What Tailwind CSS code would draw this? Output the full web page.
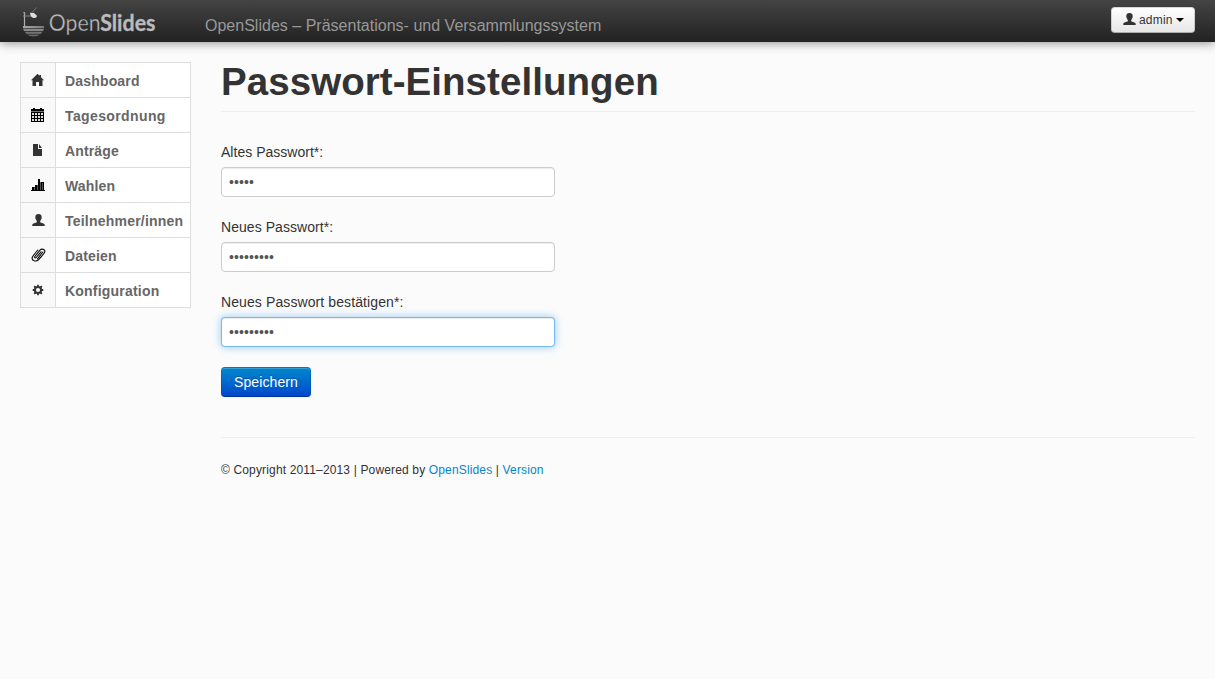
<!DOCTYPE html>
<html lang="de">
<head>
<meta charset="utf-8">
<title>OpenSlides – Passwort-Einstellungen</title>
<script src="https://cdn.jsdelivr.net/npm/@tailwindcss/browser@4"></script>
</head>
<body class="min-h-screen bg-[#fbfbfb] font-['Liberation_Sans',Arial,sans-serif] text-[14px] leading-5 text-[#333]">
<header class="flex h-[42px] items-start bg-linear-to-b from-[#444] to-[#222] pl-5 pr-5 shadow-[0_1px_10px_rgba(0,0,0,0.45)]">
  <a class="block h-[42px] w-[185px]" aria-label="OpenSlides">
    <svg width="145" height="42" viewBox="20 0 145 42">
      <defs>
        <linearGradient id="bowl" x1="0" x2="1" y1="0" y2="0"><stop offset="0" stop-color="#aaa"/><stop offset="1" stop-color="#777"/></linearGradient>
      </defs>
      <path d="M24.500 12v14" stroke="#b0b0b0" stroke-width="1.200"/>
      <path d="M23 16h8M23 12.500l2.500 1" stroke="#8a8a8a" stroke-width="1" fill="none"/>
      <path d="M32 12.500L36.500 7.500" stroke="#777" stroke-width="1"/>
      <path d="M30 12.800l4 .3 3 2.700c-.2 1.700-1.800 2.500-3.200 2.200-2.300-.3-3.600-2-3.800-5.200z" fill="#dedede"/>
      <path d="M23 26h21v2.300H23z" fill="url(#bowl)"/>
      <path d="M23.200 29h20.600l-.7 2H24z" fill="#888"/>
      <path d="M24.500 31.800h18l-1.500 1.900H26.500z" fill="#747474"/>
      <path d="M27 34.500h13c-3 2.600-10 2.600-13 0z" fill="#666"/>
      <text x="48.800" y="30.800" font-family="Lato, sans-serif" font-size="22.500" font-weight="400" fill="#bbb" stroke="#303030" stroke-width=".35" textLength="51.800" lengthAdjust="spacingAndGlyphs">Open</text>
      <text x="100.200" y="30.800" font-family="Lato, sans-serif" font-size="22.500" font-weight="700" fill="#bbb" stroke="#bbb" stroke-width=".3" textLength="55.300" lengthAdjust="spacingAndGlyphs">Slides</text>
    </svg>
  </a>
  <div class="mt-4 text-[16px] leading-5 tracking-[0.01px] text-[#999]">OpenSlides – Präsentations- und Versammlungssystem</div>
  <button class="ml-auto mt-[7px] flex h-[26px] w-[84px] items-center rounded border border-black/15 border-b-black/25 bg-linear-to-b from-white to-[#e6e6e6] bg-origin-border pl-[11px] text-[12px] leading-5 text-[#333]">
    <svg class="mr-[3px] -mt-0.5" width="13" height="12" viewBox="0 0 13 12"><path fill="#333" d="M6.500 0C8.900 0 9.900 1.500 9.600 3.500c.3.600 0 1.300-.4 1.500-.2 1-.6 1.500-1 2v1.200c1 .8 4.500 1 4.500 2.600V12H.3v-1.200C.3 9.200 3.800 9 4.800 8.200V7c-.4-.5-.8-1-1-2-.4-.2-.7-.9-.4-1.500C3.100 1.500 4.100 0 6.500 0z"/></svg>
    <span class="tracking-[0.2px]">admin</span>
    <span class="ml-[3px] border-x-4 border-t-4 border-x-transparent border-t-black"></span>
  </button>
</header>
<div class="flex gap-[30px] px-5 pt-5">
  <nav class="w-[171px] shrink-0">
    <ul class="divide-y divide-[#ddd] border border-[#ddd] bg-white text-[14px] font-bold text-[#666]">
      <li class="flex h-[35px]"><span class="flex w-[35px] items-center justify-start border-r border-[#ddd] bg-[#f9f9f9] pl-[9px]">
        <svg width="15" height="14" viewBox="0 0 15 14"><path fill="#333" d="M7.500 .8l2 1.900V2H11v2.200L14 7.300h-1.500V13H9V9H6v4H2.500V7.300H1z"/></svg></span><span class="pl-[9px] pt-2 tracking-[0.17px]">Dashboard</span></li>
      <li class="flex h-[35px]"><span class="flex w-[35px] items-center justify-start border-r border-[#ddd] bg-[#f9f9f9] pl-[10px]">
        <svg width="13" height="14" viewBox="0 0 13 14" shape-rendering="crispEdges"><path fill="#000" d="M2 0h2v1h5V0h2v1h2v2H0V1h2z"/><path fill="#777" d="M0 3h13v1H0z"/><path fill="#000" d="M0 4h13v10H0z"/><path fill="#ddd" d="M1 5h2v2H1zm3 0h2v2H4zm3 0h2v2H7zm3 0h2v2h-2zM1 8h2v2H1zm3 0h2v2H4zm3 0h2v2H7zm3 0h2v2h-2zM1 11h2v2H1zm3 0h2v2H4zm3 0h2v2H7zm3 0h2v2h-2z"/></svg></span><span class="pl-[9px] pt-2 tracking-[0.38px]">Tagesordnung</span></li>
      <li class="flex h-[35px]"><span class="flex w-[35px] items-center justify-start border-r border-[#ddd] bg-[#f9f9f9] pl-[10px]">
        <svg width="14" height="14" viewBox="0 0 14 14"><path fill="#333" d="M2 1h5v5h4v7H2zM8 1l3 4H8z"/></svg></span><span class="pl-[9px] pt-2 tracking-[0.15px]">Anträge</span></li>
      <li class="flex h-[35px]"><span class="flex w-[35px] items-center justify-center border-r border-[#ddd] bg-[#f9f9f9]">
        <svg width="14" height="14" viewBox="0 0 14 14" shape-rendering="crispEdges"><path fill="#000" d="M0 12h14v1H0zM1 9h2v3H1zm3-2h2v5H4zm3-6h2v11H7zm3 3h3v8h-3z"/><path fill="#555" d="M3 9h1v3H3zm3-2h1v5H6zm3-3h1v8H9zm2 1h1v7h-1z"/></svg></span><span class="pl-[9px] pt-2 tracking-[0.17px]">Wahlen</span></li>
      <li class="flex h-[35px]"><span class="flex w-[35px] items-center justify-start border-r border-[#ddd] bg-[#f9f9f9] pl-[11px]">
        <svg width="13" height="12" viewBox="0 0 13 12"><path fill="#333" d="M6.500 0C8.900 0 9.900 1.500 9.600 3.500c.3.600 0 1.300-.4 1.500-.2 1-.6 1.500-1 2v1.200c1 .8 4.500 1 4.500 2.600V12H.3v-1.200C.3 9.200 3.800 9 4.800 8.200V7c-.4-.5-.8-1-1-2-.4-.2-.7-.9-.4-1.500C3.100 1.500 4.100 0 6.500 0z"/></svg></span><span class="pl-[9px] pt-2 tracking-[0.22px]">Teilnehmer/innen</span></li>
      <li class="flex h-[35px]"><span class="flex w-[35px] items-center justify-center border-r border-[#ddd] bg-[#f9f9f9]">
        <svg width="15" height="14" viewBox="0 0 15 14" fill="none" stroke="#111" stroke-width="1.150" stroke-linecap="round"><path d="M10 3.800L5.200 9.500c-.8 1-2.200 0-1.400-1L9 2.200c1.600-1.900 5.600-.8 4.700 1.800-.3.900-4.200 5.600-6 7.500C4.900 14.300.2 12.600 1.300 9.200 1.600 8.300 4.300 5 6.800 2"/><path d="M11.800 4L6.500 10.800"/></svg></span><span class="pl-[9px] pt-2 tracking-[0.15px]">Dateien</span></li>
      <li class="flex h-[34px]"><span class="flex w-[35px] items-center justify-center border-r border-[#ddd] bg-[#f9f9f9]">
        <svg width="12" height="12" viewBox="0 0 12 12"><circle cx="6" cy="6" r="3.100" fill="none" stroke="#333" stroke-width="2"/><path stroke="#333" stroke-width="1.800" d="M6 .7v2M6 9.300v2M.7 6h2M9.300 6h2M2.200 2.200l1.300 1.300M8.500 8.500l1.300 1.300M9.800 2.200L8.500 3.500M3.500 8.500L2.200 9.800"/></svg></span><span class="pl-[9px] pt-2 tracking-[0.21px]">Konfiguration</span></li>
    </ul>
  </nav>
  <main class="min-w-0 flex-1">
    <div class="h-[50px] border-b border-[#eee]"><h1 class="text-[38.500px] leading-10 font-bold tracking-[0.06px]">Passwort-Einstellungen</h1></div>
    <form class="pt-[30px]">
      <label for="old" class="mb-[5px] block tracking-[0.02px]">Altes Passwort*:</label>
      <input id="old" type="password" value="admin" class="mb-5 block h-[30px] w-[334px] rounded border border-[#ccc] bg-white px-[7px] text-[14px] tracking-[0.1px] text-[#555] shadow-[inset_0_1px_1px_rgba(0,0,0,0.075)]">
      <label for="new1" class="mb-[5px] block tracking-[0.06px]">Neues Passwort*:</label>
      <input id="new1" type="password" value="openslide" class="mb-5 block h-[30px] w-[334px] rounded border border-[#ccc] bg-white px-[7px] text-[14px] tracking-[0.1px] text-[#555] shadow-[inset_0_1px_1px_rgba(0,0,0,0.075)]">
      <label for="new2" class="mb-[5px] block tracking-[0.1px]">Neues Passwort bestätigen*:</label>
      <input id="new2" type="password" value="openslide" class="mb-5 block h-[30px] w-[334px] rounded border border-[#52a8ec]/80 bg-white px-[7px] text-[14px] tracking-[0.1px] text-[#555] shadow-[inset_0_1px_1px_rgba(0,0,0,0.075),0_0_8px_rgba(82,168,236,0.6)]">
      <button type="button" class="block h-[30px] w-[90px] rounded border border-black/10 border-b-black/25 bg-linear-to-b from-[#08c] to-[#04c] bg-origin-border tracking-[0.1px] text-white shadow-[inset_0_1px_0_rgba(255,255,255,0.2),0_1px_2px_rgba(0,0,0,0.05)] text-shadow-[0_-1px_0_rgba(0,0,0,0.25)]">Speichern</button>
    </form>
    <footer class="mt-10 border-t border-[#eee] pt-[22px] text-[12px] leading-5 tracking-[0.15px]">© Copyright 2011–2013 | Powered by <a class="text-[#08c]">OpenSlides</a> | <a class="text-[#08c]">Version</a></footer>
  </main>
</div>
</body>
</html>
